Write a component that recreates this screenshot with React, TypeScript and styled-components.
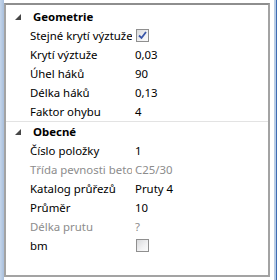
import * as React from "react"
import styled, { createGlobalStyle } from "styled-components"

const Global = createGlobalStyle`
  html, body {
    margin: 0;
    padding: 0;
    background: #ffffff;
  }
  body {
    font-family: "Segoe UI", "Noto Sans", "Liberation Sans", sans-serif;
    font-size: 11.4px;
    color: #000;
  }
`

const Window = styled.div`
  display: flex;
  width: 277px;
  height: 280px;
  background: #fff;
`

const LeftFrame = styled.div`
  width: 4px;
  background: linear-gradient(to right, #c4d5ea, #a9bfdc);
`

const Panel = styled.div`
  box-sizing: border-box;
  width: 266px;
  height: 274px;
  margin-top: 3px;
  border: 2px solid #a3a3a3;
  border-top-color: #8e8e8e;
  background: #fff;
  padding-top: 2px;
  overflow: hidden;
`

const RightFrame = styled.div`
  display: flex;
  margin-left: 4px;
  flex: 1;
`

const FrameLight = styled.div`
  width: 2px;
  background: #b9cde6;
`

const FrameDark = styled.div`
  flex: 1;
  background: #3d6cb3;
`

const Category = styled.div<{ $divider?: boolean }>`
  display: flex;
  align-items: center;
  height: 19px;
  border-top: ${({ $divider }) => ($divider ? "1px solid #e3e3e3" : "none")};
  font-weight: bold;
`

const Arrow = styled.svg`
  width: 6px;
  height: 6px;
  margin: 0 12px 0 9px;
  flex: none;
`

const Row = styled.div`
  display: flex;
  align-items: center;
  height: 19px;
`

const Label = styled.div<{ $disabled?: boolean }>`
  box-sizing: border-box;
  width: 126px;
  padding-left: 24px;
  white-space: nowrap;
  overflow: hidden;
  color: ${({ $disabled }) => ($disabled ? "#8c8c8c" : "#000")};
`

const Value = styled.div<{ $disabled?: boolean }>`
  padding-left: 3px;
  white-space: nowrap;
  color: ${({ $disabled }) => ($disabled ? "#8c8c8c" : "#000")};
`

const Box = styled.div`
  box-sizing: border-box;
  width: 13px;
  height: 13px;
  margin-left: 4px;
  border: 1px solid #8f8f8f;
  background: linear-gradient(135deg, #d9dadc 0%, #f2f2f3 60%, #fbfbfb 100%);
  display: flex;
  align-items: center;
  justify-content: center;
`

type Prop = {
  label: string
  value?: string
  check?: boolean
  disabled?: boolean
}

const Check = ({ checked }: { checked: boolean }) => (
  <Box>
    {checked && (
      <svg width="9" height="9" viewBox="0 0 9 9">
        <path d="M1 4.5 L3.5 7 L8 1" fill="none" stroke="#3a56a8" strokeWidth="1.8" />
      </svg>
    )}
  </Box>
)

const groups: { name: string; items: Prop[] }[] = [
  {
    name: "Geometrie",
    items: [
      { label: "Stejné krytí výztuže", check: true },
      { label: "Krytí výztuže", value: "0,03" },
      { label: "Úhel háků", value: "90" },
      { label: "Délka háků", value: "0,13" },
      { label: "Faktor ohybu", value: "4" },
    ],
  },
  {
    name: "Obecné",
    items: [
      { label: "Číslo položky", value: "1" },
      { label: "Třída pevnosti betonu", value: "C25/30", disabled: true },
      { label: "Katalog průřezů", value: "Pruty 4" },
      { label: "Průměr", value: "10" },
      { label: "Délka prutu", value: "?", disabled: true },
      { label: "bm", check: false },
    ],
  },
]

const App = () => (
  <>
    <Global />
    <Window>
      <LeftFrame />
      <Panel>
        {groups.map((g, i) => (
          <React.Fragment key={g.name}>
            <Category $divider={i > 0}>
              <Arrow viewBox="0 0 6 6">
                <polygon points="6,0 6,6 0,6" fill="#474747" />
              </Arrow>
              {g.name}
            </Category>
            {g.items.map((p) => (
              <Row key={p.label}>
                <Label $disabled={p.disabled}>{p.label}</Label>
                {p.check !== undefined ? (
                  <Check checked={p.check} />
                ) : (
                  <Value $disabled={p.disabled}>{p.value}</Value>
                )}
              </Row>
            ))}
          </React.Fragment>
        ))}
      </Panel>
      <RightFrame>
        <FrameLight />
        <FrameDark />
      </RightFrame>
    </Window>
  </>
)

export default App
